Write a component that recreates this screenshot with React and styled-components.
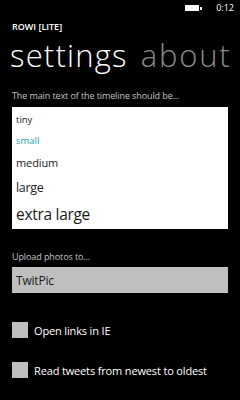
import React from "react";
import styled, { createGlobalStyle } from "styled-components";

const Global = createGlobalStyle`
  html, body { margin: 0; padding: 0; background: #000; }
  body { font-family: "Open Sans", "Noto Sans", sans-serif; color: #fff; }
  * { box-sizing: border-box; }
`;

const Screen = styled.div`
  width: 240px;
  height: 400px;
  background: #000;
  overflow: hidden;
  display: flex;
  flex-direction: column;
`;

const StatusBar = styled.div`
  height: 16px;
  display: flex;
  align-items: center;
  justify-content: flex-end;
  padding: 0 6px 0 0;
  gap: 14px;
`;

const Battery = styled.div`
  display: flex;
  align-items: center;
`;

const BatteryBody = styled.div`
  width: 14px;
  height: 6px;
  background: #fff;
`;

const BatteryNub = styled.div`
  width: 2px;
  height: 3px;
  margin-left: 1px;
  background: #fff;
`;

const Clock = styled.span`
  font-size: 9px;
  line-height: 16px;
  color: #fff;
`;

const AppTitle = styled.div`
  margin: 5px 0 0 12px;
  font-size: 9px;
  font-weight: 600;
  line-height: 12px;
`;

const PivotHeaders = styled.div`
  display: flex;
  gap: 13px;
  margin: 2px 0 0 10px;
  white-space: nowrap;
`;

const PivotHeader = styled.span`
  font-size: 31px;
  font-weight: 300;
  line-height: 40px;
  letter-spacing: ${(p) => (p.$active ? 1.2 : 1.8)}px;
  color: ${(p) => (p.$active ? "#fff" : "#8a8a8a")};
`;

const Content = styled.div`
  padding: 0 12px;
  display: flex;
  flex-direction: column;
`;

const FieldLabel = styled.div`
  font-size: 9px;
  line-height: 12px;
  letter-spacing: -0.1px;
  color: #c4c4c4;
  margin-top: ${(p) => p.$top}px;
`;

const ListBox = styled.div`
  margin-top: 5px;
  background: #fff;
  height: 122px;
  display: flex;
  flex-direction: column;
  padding: 0 4px;
`;

const ListItem = styled.div`
  height: ${(p) => p.$h}px;
  display: flex;
  align-items: center;
  font-size: ${(p) => p.$size}px;
  letter-spacing: ${(p) => p.$ls}px;
  color: ${(p) => (p.$selected ? "#1ba1b2" : "#1a1a1a")};
`;

const ComboBox = styled.div`
  margin-top: 4px;
  height: 26px;
  background: #bfbfbf;
  color: #1a1a1a;
  font-size: 12px;
  letter-spacing: -0.2px;
  display: flex;
  align-items: center;
  padding-left: 4px;
`;

const CheckRow = styled.label`
  display: flex;
  align-items: center;
  gap: 6px;
  margin-top: ${(p) => p.$top}px;
  font-size: 11px;
  letter-spacing: -0.15px;
  color: #fff;
  white-space: nowrap;
`;

const CheckBox = styled.span`
  width: 16px;
  height: 16px;
  background: #bfbfbf;
  flex: none;
`;

const sizes = [
  { label: "tiny", size: 9.5, h: 24, ls: 0 },
  { label: "small", size: 9.5, h: 18, ls: 0, selected: true },
  { label: "medium", size: 11, h: 26, ls: -0.1 },
  { label: "large", size: 12.5, h: 24, ls: -0.3 },
  { label: "extra large", size: 15.5, h: 30, ls: -0.3 },
];

export default function App() {
  return (
    <>
      <Global />
      <Screen>
        <StatusBar>
          <Battery>
            <BatteryBody />
            <BatteryNub />
          </Battery>
          <Clock>0:12</Clock>
        </StatusBar>
        <AppTitle>ROWI [LITE]</AppTitle>
        <PivotHeaders>
          <PivotHeader $active>settings</PivotHeader>
          <PivotHeader>about</PivotHeader>
        </PivotHeaders>
        <Content>
          <FieldLabel $top={15}>The main text of the timeline should be...</FieldLabel>
          <ListBox>
            {sizes.map((s) => (
              <ListItem key={s.label} $size={s.size} $h={s.h} $ls={s.ls} $selected={s.selected}>
                {s.label}
              </ListItem>
            ))}
          </ListBox>
          <FieldLabel $top={22}>Upload photos to...</FieldLabel>
          <ComboBox>TwitPic</ComboBox>
          <CheckRow $top={29}>
            <CheckBox />
            Open links in IE
          </CheckRow>
          <CheckRow $top={24}>
            <CheckBox />
            Read tweets from newest to oldest
          </CheckRow>
        </Content>
      </Screen>
    </>
  );
}
